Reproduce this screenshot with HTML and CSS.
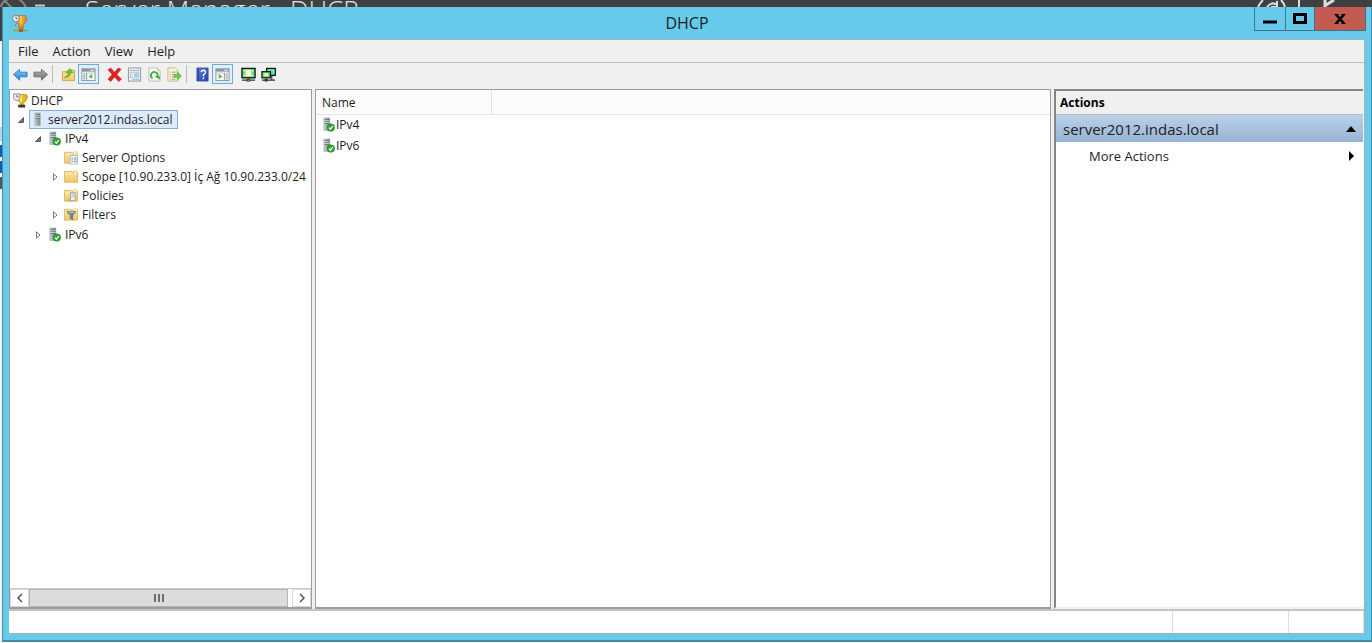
FILE: index.html
```html
<!DOCTYPE html>
<html lang="en">
<head>
<meta charset="utf-8">
<title>DHCP</title>
<link rel="stylesheet" href="styles.css">
</head>
<body>
<svg class="sprite" aria-hidden="true">
  <defs>
    <linearGradient id="gFolder" x1="0" y1="0" x2="0" y2="1"><stop offset="0" stop-color="#fbe3a0"/><stop offset="1" stop-color="#efc768"/></linearGradient>
    <linearGradient id="gServer" x1="0" y1="0" x2="1" y2="0"><stop offset="0" stop-color="#c9d2d4"/><stop offset="1" stop-color="#75858a"/></linearGradient>
    <linearGradient id="gBlue" x1="0" y1="0" x2="0" y2="1"><stop offset="0" stop-color="#7fd0fb"/><stop offset="1" stop-color="#1681d8"/></linearGradient>
    <linearGradient id="gGray" x1="0" y1="0" x2="0" y2="1"><stop offset="0" stop-color="#b5b5b5"/><stop offset="1" stop-color="#6d6d6d"/></linearGradient>
    <linearGradient id="gBook" x1="0" y1="0" x2="1" y2="1"><stop offset="0" stop-color="#5c84dd"/><stop offset="1" stop-color="#2442a8"/></linearGradient>
  </defs>
  <symbol id="trophy" viewBox="0 0 16 16">
    <path d="M5 1.500h9v4.500q0 3.500-3 4.500v2h-3v-2Q5 9 5 6z" fill="#e8c21a" stroke="#a67a12" stroke-width=".7"/>
    <path d="M13.500 3h1.700v2.500q0 2-2.700 2.500" fill="none" stroke="#c28b12"/>
    <path d="M7 2.500v5.500l2.500 2V2.500z" fill="#fff06b"/>
    <rect x="5.500" y="12.500" width="7.500" height="3" fill="#3d3a30"/>
    <path d="M.7 1h6.600v5L5 8H3L.7 6z" fill="#edf0f2" stroke="#878d94"/>
    <path d="M4 2v2.200h2" fill="none" stroke="#555" stroke-width=".8"/>
  </symbol>
  <symbol id="app" viewBox="0 0 16 18">
    <path d="M5 1.500h8.500v5q0 3-2 4v3H6.500v-3Q5 9 5 6.500z" fill="#e5a02b" stroke="#a66d1e" stroke-width=".7"/>
    <path d="M13 3.500h2v2q0 2-2.500 2.500M5 9q-2 1-1.500 3" fill="none" stroke="#bf7a1b"/>
    <path d="M8 2v7l2 1V2z" fill="#f8c659"/>
    <rect x="6" y="12" width="6" height="3" fill="#c98424"/>
    <path d="M1.500 16.500h14" stroke="#b6853f" stroke-width="1.300"/><rect x="7" y="15" width="4" height="3" fill="#8d6a3a"/>
    <circle cx="4" cy="4.500" r="3.400" fill="#e8ecee" stroke="#7d868c"/>
    <path d="M4 2.500v2.200h2" fill="none" stroke="#555" stroke-width=".8"/>
  </symbol>
  <symbol id="server" viewBox="0 0 16 16">
    <path d="M5 1h6v13.500H5z" fill="url(#gServer)" stroke="#a3aeb0" stroke-width=".6"/>
    <path d="M6 3h4M6 5h4M6 7h4" stroke="#4f5e63" stroke-width=".9"/><path d="M6 4h4M6 6h4" stroke="#eef3f4" stroke-width=".7"/>
    <rect x="8.500" y="10.500" width="2" height="2" fill="#59c85c"/>
  </symbol>
  <symbol id="serverok" viewBox="0 0 16 16">
    <path d="M3 1h6.500v13.500H3z" fill="url(#gServer)" stroke="#a3aeb0" stroke-width=".6"/>
    <path d="M4 3h5M4 5h5M4 7h5" stroke="#4f5e63" stroke-width=".9"/><path d="M4 4h5M4 6h5" stroke="#eef3f4" stroke-width=".7"/>
    <circle cx="10.500" cy="11.300" r="4" fill="#2fa32e" stroke="#1e7f20" stroke-width=".6"/>
    <path d="M8.500 11.400l1.500 1.600 2.600-3.400" fill="none" stroke="#fff" stroke-width="1.300"/>
  </symbol>
  <symbol id="folder" viewBox="0 0 16 16">
    <path d="M.5 2.500h8l1 1.500h5v10H.5z" fill="url(#gFolder)" stroke="#dcb55c" stroke-width=".9"/>
    <path d="M10 2h4v3h-4z" fill="#fff3cd" stroke="#dcb55c" stroke-width=".6"/><path d="M1 5.500h13" stroke="#fdf0c6"/>
  </symbol>
  <symbol id="options" viewBox="0 0 16 16">
    <use href="#folder"/>
    <rect x="6.500" y="6" width="8" height="9" fill="#f2f6f8" stroke="#a5b2bb" stroke-width=".8"/>
    <path d="M8 8.500h1.500M10.500 8.500h3M8 10.500h1.500M10.500 10.500h3M8 12.500h1.500M10.500 12.500h3" stroke="#62879f" stroke-width=".9"/>
  </symbol>
  <symbol id="policies" viewBox="0 0 16 16">
    <use href="#folder"/>
    <path d="M7 5h5v7q0 1.500-1.500 1.500H5V12h2z" fill="#eef0ee" stroke="#8e9292" stroke-width=".8"/><path d="M8.300 7h2.500M8.300 9h2.500" stroke="#8e9292" stroke-width=".7"/>
  </symbol>
  <symbol id="filters" viewBox="0 0 16 16">
    <use href="#folder"/>
    <path d="M3 5h9.500l-3.300 4v4.500L6.800 12V9z" fill="#688ba2" stroke="#456277" stroke-width=".7"/><path d="M5 6h6" stroke="#b9d1df"/>
  </symbol>
  <symbol id="back" viewBox="0 0 16 16"><path d="M.5 8l6.500-5.500V5.500h8v5H7V14z" fill="url(#gBlue)" stroke="#2579bf" stroke-width=".9"/></symbol>
  <symbol id="forward" viewBox="0 0 16 16"><path d="M15.500 8L9 2.500v3H1v5h8V14z" fill="url(#gGray)" stroke="#686868" stroke-width=".9"/></symbol>
  <symbol id="up" viewBox="0 0 16 16">
    <path d="M1.500 5h5l1-1.500h7v11h-13z" fill="url(#gFolder)" stroke="#c59c43" stroke-width=".9"/>
    <path d="M3.500 11q4-.5 4.500-5H5.500L9.500 1.500 13 6h-2.500q-.5 5-7 5z" fill="#6ac52f" stroke="#3e941e" stroke-width=".5"/>
  </symbol>
  <symbol id="treepane" viewBox="0 0 16 16">
    <rect x="1" y="2" width="14" height="12.500" fill="#fafafa" stroke="#8b929a"/><path d="M1 2h14v3H1z" fill="#8d96a1"/><path d="M10 3.500h4" stroke="#fff"/><path d="M1.500 6.500h13" stroke="#bbc2c9"/><path d="M6 6.500v8" stroke="#8b929a"/><path d="M2.500 8.500h2M2.500 10.500h2M2.500 12.500h2" stroke="#6b7f99"/><path d="M12 7.500v5L8 10z" fill="#4cb83f"/>
  </symbol>
  <symbol id="actionpane" viewBox="0 0 16 16">
    <rect x="1" y="2" width="14" height="12.500" fill="#fafafa" stroke="#8b929a"/><path d="M1 2h14v3H1z" fill="#8d96a1"/><path d="M10 3.500h4" stroke="#fff"/><path d="M1.500 6.500h13" stroke="#bbc2c9"/><path d="M10 6.500v8" stroke="#8b929a"/><path d="M11.500 8.500h2M11.500 10.500h2M11.500 12.500h2" stroke="#6b7f99"/><path d="M4 7.500v5L8 10z" fill="#4cb83f"/>
  </symbol>
  <symbol id="delete" viewBox="0 0 16 16"><path d="M1 3l3-2 4 4.500L12 1l3 1.500L10.500 8l5 5-3 2.500L8 10.700 4 15.500 1 13l4.500-5z" fill="#e2231f" stroke="#b3130f" stroke-width=".5"/></symbol>
  <symbol id="props" viewBox="0 0 16 16">
    <rect x="1.500" y="1" width="13" height="14" fill="#f5f7f8" stroke="#8b959d"/><path d="M3 3.500h10" stroke="#9aa6af"/><rect x="3.500" y="5.500" width="9" height="6" fill="#fff" stroke="#9badba" stroke-width=".8"/><path d="M5 7.500h1M7.500 7.500h4M5 9.500h1M7.500 9.500h4" stroke="#618eb1"/><path d="M6 13.500h3M10 13.500h3" stroke="#60b1cc"/>
  </symbol>
  <symbol id="refresh" viewBox="0 0 16 16">
    <path d="M2 1h9l3 3v11H2z" fill="#fafafa" stroke="#b6b6b6" stroke-width=".9"/><path d="M11 1v3h3" fill="none" stroke="#b6b6b6" stroke-width=".8"/>
    <path d="M6 12A3.600 3.600 0 1 1 11.200 10" fill="none" stroke="#35ae31" stroke-width="1.800"/><path d="M8 9.500h5.500V13.500z" fill="#35ae31"/>
  </symbol>
  <symbol id="export" viewBox="0 0 16 16">
    <path d="M1 1h8l2.500 2.500V15H1z" fill="#fdf6d5" stroke="#bcae84" stroke-width=".9"/><path d="M3 5.500h1M5 5.500h5M3 8h1M5 8h4M3 10.500h1M5 10.500h4M3 13h1M5 13h4" stroke="#8d8a79" stroke-width=".9"/><path d="M7.500 8H11V5l4.500 4.500L11 14v-3H7.500z" fill="#70cf3d" stroke="#4aa823" stroke-width=".5"/>
  </symbol>
  <symbol id="help" viewBox="0 0 16 16"><path d="M2 1h12v14H2z" fill="url(#gBook)" stroke="#243b92" stroke-width=".7"/><path d="M3.500 1v14" stroke="#1e368d"/><path d="M6.500 5.500Q7 3.500 9 3.500q2.500.2 2.300 2.300Q11 7 9.300 8.200 9 8.700 9 10M9 11.300v1.700" fill="none" stroke="#fff" stroke-width="1.500"/></symbol>
  <symbol id="monitor" viewBox="0 0 16 16"><rect x="1" y="1.500" width="14" height="10" fill="#33e0cb" stroke="#111" stroke-width="1.400"/><path d="M2.500 3h2v2h-2zM11.500 3h2v2h-2zM2.500 8h2v2h-2zM11.500 8h2v2h-2z" fill="#e6ee2f"/><path d="M5 3h6v7H5z" fill="#f4fcf4" stroke="#d7ea50" stroke-width=".8"/><path d="M8 12v2M1 14h14" stroke="#333" stroke-width="1.200"/><path d="M6 12.500h4v3H6z" fill="#333"/><path d="M7 14h2" stroke="#d9dc29"/></symbol>
  <symbol id="monitors" viewBox="0 0 16 16"><rect x="6" y="1.500" width="9.300" height="7.500" fill="#33e0cb" stroke="#111" stroke-width="1.300"/><path d="M8 3.500h2M11 3.500h2.500v3" stroke="#e6ee2f" fill="none"/><rect x="1" y="5" width="9" height="6.500" fill="#49e4c9" stroke="#111" stroke-width="1.300"/><path d="M3.500 7h4v2.500h-4z" fill="#f6f9c8" stroke="#e6ee2f"/><path d="M5.500 12v2M1 14h14M11.500 9v5" stroke="#333" stroke-width="1.200"/><path d="M4 12.500h3v3H4z" fill="#333"/></symbol>
  <symbol id="open" viewBox="0 0 8 8"><path d="M6.500 1.500v5h-5z" fill="#777" stroke="#444" stroke-width=".8"/></symbol>
  <symbol id="closed" viewBox="0 0 8 8"><path d="M2.500 .8v6.400L6 4z" fill="#fff" stroke="#777"/></symbol>
</svg>

<div class="desktop">
  <div class="behind" aria-hidden="true">
    <svg class="behind-nav" viewBox="0 0 50 7"><circle cx="13" cy="11" r="13" fill="none" stroke="#858585" stroke-width="2"/><path d="M4 0l9 9" stroke="#858585" stroke-width="2"/><path d="M35 5.500h10" stroke="#ccc" stroke-width="2"/></svg>
    <span class="behind-title">Server Manager › DHCP</span>
    <svg class="behind-tools" viewBox="0 0 90 7"><path d="M3 7Q5 3 8 0M26 0q3 3 4 7M12 7q5-6 10-2M22 1v6h-6M44 0v7" fill="none" stroke="#ddd" stroke-width="2"/><path d="M70 0v7M71 5l8-5" fill="none" stroke="#ddd" stroke-width="3"/></svg>
  </div>
  <div class="edge" aria-hidden="true"><i class="dark"></i><i class="pale"></i><i class="blue"></i><i class="blue"></i><i class="dim"></i></div>

  <main class="window">
    <header class="titlebar">
      <svg class="app-icon"><use href="#app"/></svg>
      <h1>DHCP</h1>
      <div class="controls">
        <button class="min" aria-label="Minimize"><svg viewBox="0 0 14 12"><path d="M0 9h14" stroke="#000" stroke-width="3"/></svg></button>
        <button class="max" aria-label="Maximize"><svg viewBox="0 0 14 12"><rect x="1.500" y="1.500" width="11" height="8" fill="none" stroke="#000" stroke-width="3"/></svg></button>
        <button class="close" aria-label="Close"><svg viewBox="0 0 14 12"><path d="M3 1.500l8 9M11 1.500l-8 9" stroke="#000" stroke-width="2.600"/><path d="M1.500 1.500h4M8.500 1.500h4M1.500 10.500h4M8.500 10.500h4" stroke="#000" stroke-width="1.200"/></svg></button>
      </div>
    </header>

    <div class="client">
      <nav class="menubar"><button>File</button><button>Action</button><button>View</button><button>Help</button></nav>
      <div class="toolbar" role="toolbar" aria-label="Tools">
        <button aria-label="Back"><svg><use href="#back"/></svg></button>
        <button aria-label="Forward"><svg><use href="#forward"/></svg></button>
        <span class="sep"></span>
        <button aria-label="Up one level"><svg><use href="#up"/></svg></button>
        <button class="on" aria-label="Show or hide console tree"><svg><use href="#treepane"/></svg></button>
        <span class="space"></span>
        <button aria-label="Delete"><svg><use href="#delete"/></svg></button>
        <button aria-label="Properties"><svg><use href="#props"/></svg></button>
        <button aria-label="Refresh"><svg><use href="#refresh"/></svg></button>
        <button aria-label="Export list"><svg><use href="#export"/></svg></button>
        <span class="sep"></span>
        <button aria-label="Help topics"><svg><use href="#help"/></svg></button>
        <button class="on" aria-label="Show or hide action pane"><svg><use href="#actionpane"/></svg></button>
        <span class="space"></span>
        <button aria-label="Add server"><svg><use href="#monitor"/></svg></button>
        <button aria-label="Manage servers"><svg><use href="#monitors"/></svg></button>
      </div>

      <div class="panes">
        <section class="tree-pane">
          <ul class="tree">
            <li><div class="row"><span class="node"><svg><use href="#trophy"/></svg>DHCP</span></div>
              <ul>
                <li><div class="row"><svg class="toggle"><use href="#open"/></svg><span class="node selected"><svg><use href="#server"/></svg>server2012.indas.local</span></div>
                  <ul>
                    <li><div class="row"><svg class="toggle"><use href="#open"/></svg><span class="node"><svg><use href="#serverok"/></svg>IPv4</span></div>
                      <ul class="spaced">
                        <li><div class="row"><span class="toggle"></span><span class="node"><svg><use href="#options"/></svg>Server Options</span></div></li>
                        <li><div class="row"><svg class="toggle"><use href="#closed"/></svg><span class="node"><svg><use href="#folder"/></svg>Scope [10.90.233.0] İç Ağ 10.90.233.0/24</span></div></li>
                        <li><div class="row"><span class="toggle"></span><span class="node"><svg><use href="#policies"/></svg>Policies</span></div></li>
                        <li><div class="row"><svg class="toggle"><use href="#closed"/></svg><span class="node"><svg><use href="#filters"/></svg>Filters</span></div></li>
                      </ul>
                    </li>
                    <li><div class="row"><svg class="toggle"><use href="#closed"/></svg><span class="node"><svg><use href="#serverok"/></svg>IPv6</span></div></li>
                  </ul>
                </li>
              </ul>
            </li>
          </ul>
          <div class="scrollbar">
            <button aria-label="Scroll left"><svg viewBox="0 0 8 10"><path d="M6 1L2 5l4 4" fill="none" stroke="#555" stroke-width="1.500"/></svg></button>
            <div class="thumb"><svg viewBox="0 0 10 8"><path d="M1 0v8M5 0v8M9 0v8" stroke="#555" stroke-width="1.600"/></svg></div>
            <button aria-label="Scroll right"><svg viewBox="0 0 8 10"><path d="M2 1l4 4-4 4" fill="none" stroke="#555" stroke-width="1.500"/></svg></button>
          </div>
        </section>

        <section class="list-pane">
          <table>
            <thead><tr><th class="name">Name</th><th></th></tr></thead>
            <tbody>
              <tr><td colspan="2"><span class="item"><svg><use href="#serverok"/></svg>IPv4</span></td></tr>
              <tr><td colspan="2"><span class="item"><svg><use href="#serverok"/></svg>IPv6</span></td></tr>
            </tbody>
          </table>
        </section>

        <aside class="actions-pane">
          <h2>Actions</h2>
          <button class="group"><span>server2012.indas.local</span><svg viewBox="0 0 10 10"><path d="M0 8h10L5 2z"/></svg></button>
          <button class="more"><span>More Actions</span><svg viewBox="0 0 10 10"><path d="M3 0v10l5-5z"/></svg></button>
        </aside>
      </div>

      <footer class="status"><span></span><span class="s2"></span><span class="s3"></span></footer>
    </div>
  </main>
</div>
</body>
</html>
```
FILE: styles.css
```css
* { box-sizing: border-box; }
body { margin: 0; font: 12px/16px "Open Sans", "Noto Sans", sans-serif; color: #1e1e1e; }
button { font: inherit; color: inherit; background: none; border: 0; padding: 0; margin: 0; }
ul { list-style: none; margin: 0; padding: 0; }
svg { display: block; flex: none; }
.sprite { position: absolute; width: 0; height: 0; }

.desktop { height: 100vh; overflow: hidden; display: grid; grid-template: 7px 1fr / 2px 1fr; background: #f4f4f4; }
.behind { grid-column: 1 / -1; display: flex; background: #404040; overflow: hidden; color: #e4e4e4; }
.behind-nav { width: 50px; height: 7px; }
.behind-title { flex: 1; padding-left: 35px; font-size: 26px; line-height: 18px; font-weight: 300; white-space: nowrap; }
.behind-tools { width: 90px; height: 7px; margin-right: 27px; }
.edge { display: flex; flex-direction: column; gap: 4px; }
.edge .dark { height: 34px; background: #404040; margin-bottom: 82px; }
.edge .pale { height: 14px; background: #b9d3ee; }
.edge .blue { height: 12px; background: #0b62b2; }
.edge .dim { height: 12px; background: #555; }

.window { display: flex; flex-direction: column; min-height: 0; margin-bottom: 1px; padding: 0 6px 6px; background: #66caea; border: solid #4c8ba3; border-width: 0 1px 2px; }
.titlebar { display: grid; grid-template-columns: 1fr auto 1fr; height: 32px; }
.app-icon { width: 16px; height: 18px; margin: 7px 0 0 3px; }
h1 { margin: 0; font-size: 16px; line-height: 32px; font-weight: 400; }
.controls { display: flex; justify-self: end; height: 24px; border: 1px solid #3e7284; border-top: 0; margin-right: -1px; }
.controls button { display: grid; place-items: center; border-right: 1px solid #3e7284; }
.controls svg { width: 14px; height: 12px; }
.controls .min { width: 31px; }
.controls .max { width: 29px; }
.controls .close { width: 50px; background: #c35b52; border: 0; }

.client { flex: 1; min-height: 0; display: flex; flex-direction: column; background: #f0f0f0; border: 1px solid #a5b4ba; border-left: 0; }
.menubar { display: flex; gap: 14px; padding: 3px 9px; border-bottom: 1px solid #bdbdbd; }
.menubar button { font-size: 13px; line-height: 16px; }
.toolbar { display: flex; align-items: center; height: 26px; padding: 0 1px 4px; }
.toolbar button { display: grid; place-items: center; width: 20px; height: 20px; }
.toolbar svg { width: 15px; height: 15px; }
.toolbar .on { width: 21px; background: #e3f0fa; border: 1px solid #66aee0; }
.toolbar .sep { width: 1px; height: 18px; margin: 0 5px 0 2px; background: #b9b9b9; }
.toolbar .space { width: 5px; }

.panes { flex: 1; min-height: 0; display: flex; gap: 3px; padding-right: 1px; }
.tree-pane { display: flex; flex-direction: column; width: 303px; background: #fff; border: 1px solid #9a9ca5; border-bottom-width: 2px; overflow: hidden; }
.tree { flex: 1; padding: 1px 0 0 2px; overflow: hidden; }
.tree ul ul { padding-left: 17px; }
.tree .spaced { padding-bottom: 1px; }
.row { display: flex; align-items: center; height: 19px; white-space: nowrap; }
.toggle { width: 8px; height: 8px; margin: 0 4px 0 5px; flex: none; }
.node { display: flex; align-items: center; gap: 3px; height: 19px; padding-right: 4px; border: 1px solid transparent; }
.node svg { width: 15px; height: 15px; }
.selected { background: #dcebfc; border-color: #84acdd; }
.scrollbar { display: flex; height: 19px; border-top: 1px solid #ccc; }
.scrollbar button { display: grid; place-items: center; width: 19px; border: 1px solid #d7d7d7; }
.scrollbar button svg { width: 8px; height: 10px; }
.thumb { flex: 1; display: grid; place-items: center; margin-right: 4px; background: #dcdcdc; border: 1px solid #b4b4b4; }
.thumb svg { width: 10px; height: 8px; }

.list-pane { flex: 1; min-width: 0; background: #fff; border: 1px solid #9a9ca5; border-bottom-width: 2px; }
table { width: 100%; border-collapse: collapse; table-layout: fixed; }
th { height: 24px; padding: 3px 6px 0; font-weight: 400; text-align: left; background: #fcfcfc; border-bottom: 1px solid #e3e3e3; }
.name { width: 175px; border-right: 1px solid #e3e3e3; }
td { height: 21px; padding: 0 5px; }
.item { display: flex; align-items: center; }
.item svg { width: 15px; height: 15px; }

.actions-pane { width: 309px; background: #fff; border: solid #858585; border-width: 2px 0 0 2px; border-bottom: 2px solid #f0f0f0; }
h2 { margin: 0; padding: 4px 4px 3px; font-size: 12px; line-height: 16px; font-weight: 700; color: #000; background: #f0f0f0; border-bottom: 1px solid #b8b8b8; }
.actions-pane button { display: flex; align-items: center; justify-content: space-between; width: 100%; text-align: left; padding-right: 7px; }
.actions-pane svg { width: 10px; height: 10px; }
.actions-pane .group { height: 27px; padding-left: 7px; font-size: 15px; background: linear-gradient(#b9d1ea, #98b3d2); }
.actions-pane .more { height: 27px; padding-left: 33px; font-size: 13px; }

.status { display: flex; height: 24px; background: #fff; border-top: 2px solid #c4c4c4; }
.status span { flex: 1; border-right: 1px solid #dcdcdc; }
.status .s2 { flex: none; width: 116px; }
.status .s3 { flex: none; width: 75px; }
```
